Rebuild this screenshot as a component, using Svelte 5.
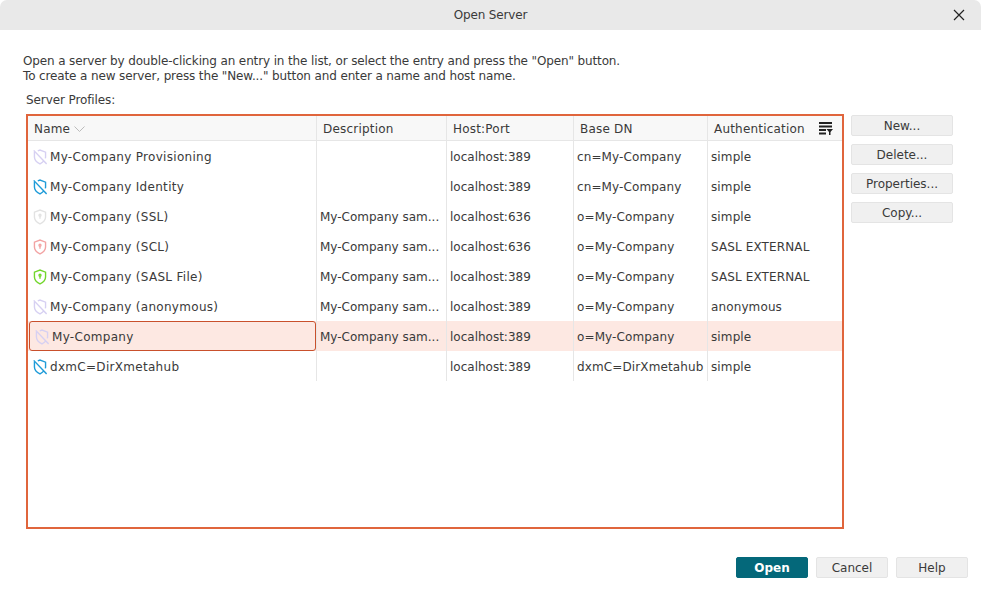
<script>
	const rows = [
		{ name: 'My-Company Provisioning', desc: '', host: 'localhost:389', dn: 'cn=My-Company', auth: 'simple', icon: 'off', color: '#d6d0f2' },
		{ name: 'My-Company Identity', desc: '', host: 'localhost:389', dn: 'cn=My-Company', auth: 'simple', icon: 'off', color: '#1e9bd8' },
		{ name: 'My-Company (SSL)', desc: 'My-Company sam...', host: 'localhost:636', dn: 'o=My-Company', auth: 'simple', icon: 'lock', color: '#e2e2e2' },
		{ name: 'My-Company (SCL)', desc: 'My-Company sam...', host: 'localhost:636', dn: 'o=My-Company', auth: 'SASL EXTERNAL', icon: 'lock', color: '#f2a3a3' },
		{ name: 'My-Company (SASL File)', desc: 'My-Company sam...', host: 'localhost:389', dn: 'o=My-Company', auth: 'SASL EXTERNAL', icon: 'lock', color: '#72d62c' },
		{ name: 'My-Company (anonymous)', desc: 'My-Company sam...', host: 'localhost:389', dn: 'o=My-Company', auth: 'anonymous', icon: 'off', color: '#d6d0f2' },
		{ name: 'My-Company', desc: 'My-Company sam...', host: 'localhost:389', dn: 'o=My-Company', auth: 'simple', icon: 'off', color: '#d6d0f2', selected: true },
		{ name: 'dxmC=DirXmetahub', desc: '', host: 'localhost:389', dn: 'dxmC=DirXmetahub', auth: 'simple', icon: 'off', color: '#1e9bd8' }
	];
	const sideButtons = ['New...', 'Delete...', 'Properties...', 'Copy...'];
</script>

<div class="dialog">
	<header class="titlebar">
		<span>Open Server</span>
		<svg class="close" width="12" height="12" viewBox="0 0 12 12">
			<path d="M1 1 L11 11 M11 1 L1 11" stroke="#222" stroke-width="1.2" fill="none" />
		</svg>
	</header>

	<div class="content">
		<p class="intro">
			Open a server by double-clicking an entry in the list, or select the entry and press the "Open" button.<br />
			To create a new server, press the "New..." button and enter a name and host name.
		</p>
		<div class="label">Server Profiles:</div>

		<div class="main">
			<div class="table">
				<div class="row head">
					<div class="cell name">Name
						<svg width="11" height="6" viewBox="0 0 11 6"><path d="M0.5 0.5 L5.5 5.5 L10.5 0.5" stroke="#bbb" fill="none" /></svg>
					</div>
					<div class="cell desc">Description</div>
					<div class="cell host">Host:Port</div>
					<div class="cell dn">Base DN</div>
					<div class="cell auth">Authentication
						<svg class="columns" width="14" height="13" viewBox="0 0 14 13">
							<path d="M0 0H13V2H0Z M0 3.5H13V5.5H0Z M0 7H7V9H0Z M0 10.5H7V12.5H0Z" fill="#222" />
							<path d="M7.5 7H14L11.5 10V13H10V10Z" fill="#222" />
						</svg>
					</div>
				</div>
				{#each rows as row}
					<div class="row" class:selected={row.selected}>
						<div class="cell name">
							<span class="namebox">
								<svg width="14" height="16" viewBox="2 0.5 20 23" fill="none" stroke={row.color} stroke-width="2">
									{#if row.icon === 'off'}
										<path d="M19.7 14a6.9 6.9 0 0 0 .3-2V5l-8-3-3.2 1.2" />
										<path d="M4.7 4.7L4 5v7c0 6 8 10 8 10a20.3 20.3 0 0 0 5.6-4.4" />
										<path d="M3 2.5L21.5 22" />
									{:else}
										<path d="M12 22s8-4 8-10V5l-8-3-8 3v7c0 6 8 10 8 10z" />
										<circle cx="12" cy="9.5" r="1.4" />
										<path d="M12 11v3.5" />
									{/if}
								</svg>
								{row.name}
							</span>
						</div>
						<div class="cell desc">{row.desc}</div>
						<div class="cell host">{row.host}</div>
						<div class="cell dn">{row.dn}</div>
						<div class="cell auth">{row.auth}</div>
					</div>
				{/each}
			</div>

			<div class="side">
				{#each sideButtons as label}
					<button>{label}</button>
				{/each}
			</div>
		</div>

		<div class="actions">
			<button class="primary">Open</button>
			<button>Cancel</button>
			<button>Help</button>
		</div>
	</div>
</div>

<style>
	:global(body) {
		margin: 0;
		background: #fff;
	}
	.dialog {
		width: 981px;
		height: 591px;
		display: flex;
		flex-direction: column;
		font-family: 'DejaVu Sans', sans-serif;
		font-size: 12px;
		color: #3a3a3a;
		overflow: hidden;
	}
	.titlebar {
		height: 30px;
		flex: none;
		background: #e9e9e9;
		border-radius: 7px 7px 0 0;
		display: flex;
		align-items: center;
		justify-content: center;
		position: relative;
		letter-spacing: -0.15px;
	}
	.close {
		position: absolute;
		right: 16px;
		top: 9px;
	}
	.content {
		flex: 1;
		display: flex;
		flex-direction: column;
		padding: 24px 13px 13px 23px;
	}
	.intro {
		margin: 0;
		line-height: 15px;
		letter-spacing: -0.13px;
	}
	.label {
		margin: 9px 0 0 3px;
		height: 15px;
		line-height: 15px;
		letter-spacing: -0.1px;
	}
	.main {
		display: flex;
		gap: 7px;
		margin: 6px 15px 0 3px;
	}
	.table {
		width: 818px;
		height: 415px;
		box-sizing: border-box;
		border: 2px solid #e0653c;
		display: flex;
		flex-direction: column;
	}
	.row {
		display: flex;
		height: 30px;
	}
	.row.head {
		box-sizing: border-box;
		height: 25px;
		background: #f8f8f8;
		border-bottom: 1px solid #e6e6e6;
	}
	.row.selected {
		background: #fde8e2;
	}
	.cell {
		box-sizing: border-box;
		padding-left: 3px;
		border-right: 1px solid #e6e6e6;
		display: flex;
		align-items: center;
		white-space: nowrap;
	}
	.cell.desc, .cell.host, .cell.dn, .cell.auth {
		padding-top: 1px;
	}
	.cell.dn, .cell.auth {
		letter-spacing: 0.12px;
	}
	.row.head .cell {
		padding-left: 6px;
		padding-top: 2px;
		gap: 4px;
		letter-spacing: 0.2px;
	}
	.name { width: 289px; }
	.desc { width: 130px; }
	.host { width: 127px; }
	.dn { width: 134px; }
	.auth { width: 134px; border-right: none; position: relative; }
	.cell.name { padding-left: 4px; }
	.namebox {
		display: flex;
		align-items: center;
		gap: 3px;
		flex: 1;
		height: 100%;
		box-sizing: border-box;
		padding-left: 1px;
		padding-top: 1px;
		letter-spacing: 0.3px;
	}
	.selected .namebox {
		border: 1px solid #c9502c;
		border-radius: 3px;
		margin-left: -3px;
		padding-left: 5px;
		padding-top: 1px;
		background: #fde8e2;
	}
	.columns {
		position: absolute;
		right: 9px;
		top: 6px;
	}
	.side {
		display: flex;
		flex-direction: column;
		gap: 8px;
		margin-top: 1px;
	}
	button {
		font: inherit;
		color: inherit;
		width: 102px;
		height: 21px;
		padding: 0;
		background: #f0f0f0;
		border: 1px solid #e4e4e4;
		border-radius: 2px;
	}
	.actions {
		display: flex;
		justify-content: flex-end;
		gap: 8px;
		margin-top: auto;
	}
	.actions button {
		width: 72px;
	}
	.primary {
		background: #04687a;
		border-color: #04687a;
		color: #fff;
		font-weight: 700;
	}
</style>
